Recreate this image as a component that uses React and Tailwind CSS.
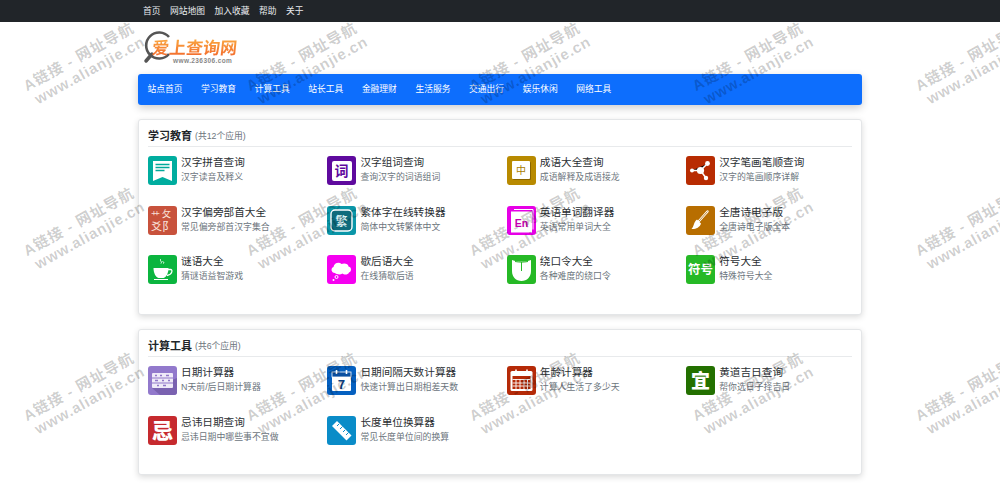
const cjk = { fontFamily: '"Liberation Sans", "Noto Sans CJK SC", sans-serif' };
const iconFont = '"Noto Sans CJK SC", sans-serif';

const topLinks = ["首页", "网站地图", "加入收藏", "帮助", "关于"];
const navLinks = ["站点首页", "学习教育", "计算工具", "站长工具", "金融理财", "生活服务", "交通出行", "娱乐休闲", "网络工具"];

function Glyph({ x = 14.5, y = 20, size = 16, fill = "#fff", weight = 700, children }) {
  return (
    <text x={x} y={y} fontSize={size} fontWeight={weight} fill={fill} textAnchor="middle" fontFamily={iconFont}>
      {children}
    </text>
  );
}

const icons = {
  pinyin: (
    <>
      <path d="M5 5h19v20l-9.500-4L5 25z" fill="#fff" />
      <path d="M7.500 8.500h14M7.500 11.500h14M7.500 14.500h9" stroke="#00a99a" strokeWidth="1.300" />
    </>
  ),
  word: (
    <>
      <rect x="5" y="5" width="20" height="20" rx="2" fill="#fff" />
      <Glyph y={20} size={14} fill="#5f0a9e">词</Glyph>
    </>
  ),
  idiom: (
    <>
      <rect x="6" y="6" width="18" height="18" rx="1" fill="#8a6500" />
      <rect x="5" y="5" width="18" height="18" rx="1" fill="#fff" />
      <Glyph x={14} y={18} size={10} weight={400} fill="#a87c00">中</Glyph>
    </>
  ),
  stroke: (
    <>
      <path d="M6 14.500l8.500 0L21 8M14.500 14.500L20 22" stroke="#fff" strokeWidth="1.500" />
      <circle cx="14.500" cy="14.500" r="3.600" fill="#fff" />
      <circle cx="6" cy="14.500" r="2" fill="#fff" />
      <circle cx="21.500" cy="7.500" r="2.400" fill="#fff" />
      <circle cx="20" cy="22" r="2.200" fill="#fff" />
    </>
  ),
  radical: (
    <>
      <text x="3" y="13" fontSize="9" fill="#f8e0d8" fontFamily={iconFont}>艹</text>
      <text x="14" y="11" fontSize="9" fill="#f8e0d8" fontFamily={iconFont}>攵</text>
      <text x="3" y="25" fontSize="11" fill="#f8e0d8" fontFamily={iconFont}>爻</text>
      <text x="14" y="25" fontSize="12" fill="#f8e0d8" fontFamily={iconFont}>阝</text>
    </>
  ),
  trad: (
    <>
      <rect x="4" y="4" width="21" height="21" rx="4" fill="#0f6b7c" stroke="#fff" strokeWidth="1.400" />
      <Glyph y={19.500} size={12} fill="#d8f2f5">繁</Glyph>
    </>
  ),
  en: (
    <>
      <path d="M7 3.500h19v20" fill="none" stroke="#fff" strokeWidth="1" />
      <rect x="4" y="5.500" width="21" height="21" fill="#fff" />
      <text x="14.500" y="20.500" fontSize="10.500" fontWeight="700" fill="#c400b0" textAnchor="middle" fontFamily="Liberation Sans">En</text>
    </>
  ),
  brush: (
    <>
      <path d="M21.500 5.500L13 15" stroke="#fff" strokeWidth="2.400" strokeLinecap="round" />
      <path d="M21.500 5.500L13 15" stroke="#b86e00" strokeWidth=".8" />
      <path d="M11 13.500l4 4c-1 4-6 6-9.500 5.500 2.500-2 2-7 5.500-9.500z" fill="#fff" />
    </>
  ),
  tea: (
    <>
      <path d="M5.500 13h15c0 5-2 9-5 10h-5c-3-1-5-5-5-10z" fill="#fff" />
      <path d="M20 14.500h2.500c2.500 0 2 5-3.500 6" fill="none" stroke="#fff" strokeWidth="1.300" />
      <path d="M6 24.500h14" stroke="#fff" strokeWidth="1.200" />
      <path d="M13 4c-2 1.500 1.500 2.500 0 4.500M15.500 8.500c1-1 0-1.500-1-2" fill="none" stroke="#fff" strokeWidth="1" />
    </>
  ),
  cloud: (
    <>
      <path d="M8 18c-4 0-4.500-5-1.500-6 .5-4 5.500-5.500 8-3 3-1.500 7 0 7 2.500 3.500.5 3 5.500.5 6-1 2.500-5 2.500-6.500 1-2 1.500-5.500 1.200-7.500-.5z" fill="#fff" />
      <circle cx="9.500" cy="22" r="1.500" fill="none" stroke="#fff" />
      <circle cx="6.500" cy="25" r="1" fill="#fff" />
    </>
  ),
  tongue: (
    <>
      <path d="M5 5c6 2 13 2 19 0v11c0 6-4 10-9.500 10S5 22 5 16z" fill="#fff" />
      <path d="M8 6.500c4 .8 9 .8 13 0M14.500 7v9" stroke="#26b926" strokeWidth="1" fill="none" />
    </>
  ),
  symbol: <Glyph y={19} size={12.500}>符号</Glyph>,
  abacus: (
    <>
      <path d="M29 12v17H12L4 22z" fill="#7a62b0" />
      <rect x="4" y="7" width="21" height="15" rx="1" fill="#efeaf8" />
      <path d="M4 12h21M4 17h21" stroke="#9076c8" strokeWidth="1" />
      <path d="M7 9.500h2M12 9.500h2M18 9.500h3M7 14.500h3M14 14.500h2M20 14.500h2M9 19.500h2M15 19.500h3" stroke="#9076c8" strokeWidth="1.500" />
    </>
  ),
  days: (
    <>
      <rect x="5" y="6" width="19" height="19" rx="1" fill="#fff" />
      <rect x="5" y="6" width="19" height="5" fill="#0a4fa0" stroke="#fff" strokeWidth=".8" />
      <path d="M9.500 4v4M19.500 4v4" stroke="#fff" strokeWidth="1.600" />
      <Glyph y={23} size={12.500} fill="#0a3f80">7</Glyph>
    </>
  ),
  age: (
    <>
      <rect x="3.500" y="5" width="22" height="20" rx="1.500" fill="#fff" />
      <rect x="5.500" y="10" width="18" height="13" fill="#b52a08" />
      <path d="M9 3.500v4M20 3.500v4" stroke="#fff" strokeWidth="1.600" />
      <path d="M5.500 13.500h18M5.500 17h18M5.500 20h18M9 13v10M13 13v10M17 13v10M20.500 13v10" stroke="#fff" strokeWidth=".9" />
    </>
  ),
  lucky: <Glyph y={21.500} size={19} weight={900}>宜</Glyph>,
  taboo: <Glyph y={22} size={21} weight={900}>忌</Glyph>,
  ruler: (
    <>
      <path d="M10 5l14.500 14.500-5 5L5 10z" fill="#fff" />
      <path d="M10 10l2-2M13 13l2.500-2.500M16 16l2-2M19 19l2.500-2.500" stroke="#0a8cc8" strokeWidth="1" />
    </>
  ),
};

const sections = [
  {
    title: "学习教育",
    count: "(共12个应用)",
    top: "h-[196px]",
    items: [
      ["pinyin", "bg-[#00ad9f]", "汉字拼音查询", "汉字读音及释义"],
      ["word", "bg-[#5f0a9e]", "汉字组词查询", "查询汉字的词语组词"],
      ["idiom", "bg-[#b88a00]", "成语大全查询", "成语解释及成语接龙"],
      ["stroke", "bg-[#b82c02]", "汉字笔画笔顺查询", "汉字的笔画顺序详解"],
      ["radical", "bg-[#c8523c]", "汉字偏旁部首大全", "常见偏旁部首汉字集合"],
      ["trad", "bg-[#0a96a8]", "繁体字在线转换器", "简体中文转繁体中文"],
      ["en", "bg-[#e600e6]", "英语单词翻译器", "英语常用单词大全"],
      ["brush", "bg-[#b86e00]", "全唐诗电子版", "全唐诗电子版全本"],
      ["tea", "bg-[#0bb53f]", "谜语大全", "猜谜语益智游戏"],
      ["cloud", "bg-[#f500f0]", "歇后语大全", "在线猜歇后语"],
      ["tongue", "bg-[#26b926]", "绕口令大全", "各种难度的绕口令"],
      ["symbol", "bg-[#26b926]", "符号大全", "特殊符号大全"],
    ],
  },
  {
    title: "计算工具",
    count: "(共6个应用)",
    top: "h-[146px]",
    items: [
      ["abacus", "bg-[#9279cc]", "日期计算器", "N天前/后日期计算器"],
      ["days", "bg-[#0560c0]", "日期间隔天数计算器", "快速计算出日期相差天数"],
      ["age", "bg-[#b52a08]", "年龄计算器", "计算人生活了多少天"],
      ["lucky", "bg-[#237000]", "黄道吉日查询", "帮你选日子择吉日"],
      ["taboo", "bg-[#c62a2e]", "忌讳日期查询", "忌讳日期中哪些事不宜做"],
      ["ruler", "bg-[#0a8cc8]", "长度单位换算器", "常见长度单位间的换算"],
    ],
  },
];

function AppItem({ icon, color, name, desc }) {
  return (
    <div className="flex h-[49.5px] items-start gap-[4px]">
      <svg viewBox="0 0 29 29" className={`h-[29px] w-[29px] shrink-0 rounded-[3px] ${color}`}>
        {icons[icon]}
      </svg>
      <div className="-mt-[1px] min-w-0 whitespace-nowrap">
        <div className="h-[15px] text-[10.65px] leading-[15px] text-[#2b2f33]">{name}</div>
        <div className="h-[15px] text-[8.9px] leading-[15px] text-[#6c757d]">{desc}</div>
      </div>
    </div>
  );
}

function Section({ section }) {
  return (
    <section className={`rounded-[3px] border border-[#e4e6e8] bg-white px-[9px] pt-[5px] shadow-[0_2px_6px_rgba(0,0,0,0.15)] ${section.top}`}>
      <div className="flex h-[22px] items-center gap-[3px] border-b border-[#e8eaec] pt-[2px]">
        <span className="text-[11px] font-bold text-[#212529]">{section.title}</span>
        <span className="text-[8.75px] text-[#6c757d]">{section.count}</span>
      </div>
      <div className="mt-[9px] grid grid-cols-[179.400px_179.400px_179.400px_1fr]">
        {section.items.map(([icon, color, name, desc]) => (
          <AppItem key={name} icon={icon} color={color} name={name} desc={desc} />
        ))}
      </div>
    </section>
  );
}

function Logo() {
  return (
    <div className="relative h-[36px] w-[100px]">
      <svg viewBox="0 0 36 36" className="absolute left-[3px] top-0 h-[36px] w-[36px]">
        <path d="M28 7A13 13 0 1 0 28 24" fill="none" stroke="#555" strokeWidth="2.600" />
        <path d="M11 24L5 31" stroke="#555" strokeWidth="3.500" strokeLinecap="round" />
      </svg>
      <div className="absolute left-[14px] top-[9px] -skew-x-6 whitespace-nowrap bg-gradient-to-b from-[#f9a63f] to-[#f1602a] bg-clip-text text-[17px] font-bold leading-[20px] text-transparent">
        爱上查询网
      </div>
      <div className="absolute left-[35px] top-[27px] whitespace-nowrap text-[6.500px] font-bold leading-[8px] tracking-[0.4px] text-[#888]">
        www.236306.com
      </div>
    </div>
  );
}

function Watermark() {
  const tiles = Array.from({ length: 15 });
  return (
    <div className="pointer-events-none absolute inset-0 overflow-hidden">
      <div className="-ml-[29px] -mt-[19px] grid w-[1120px] grid-cols-[repeat(5,223px)] auto-rows-[165px]">
        {tiles.map((_, i) => (
          <div key={i} className="flex -rotate-[29deg] flex-col items-center justify-center font-bold leading-[19px] text-black/20">
            <div className="whitespace-nowrap text-[15px] tracking-[1px]">A链接 - 网址导航</div>
            <div className="-mt-[2px] ml-[6px] whitespace-nowrap text-[15px] tracking-[0.8px]">www.alianjie.cn</div>
          </div>
        ))}
      </div>
    </div>
  );
}

export default function App() {
  return (
    <div className="relative h-[485px] overflow-hidden bg-white" style={cjk}>
      <header className="h-[22px] bg-[#212529]">
        <div className="mx-auto flex h-full w-[724px] items-center gap-[9.500px] pl-[5px] pt-[2px] text-[8.750px] text-[#e9ecef]">
          {topLinks.map((t) => (
            <span key={t}>{t}</span>
          ))}
        </div>
      </header>

      <main className="mx-auto w-[724px]">
        <div className="pt-[8px]">
          <Logo />
        </div>
        <nav className="mt-[8px] flex h-[31px] items-center gap-[18.600px] rounded-[3px] bg-[#0d6efd] pl-[9.500px] pt-[1px] text-[8.750px] text-white shadow-[0_3px_8px_rgba(0,0,0,0.2)]">
          {navLinks.map((t) => (
            <span key={t}>{t}</span>
          ))}
        </nav>
        <div className="mt-[14px] flex flex-col gap-[14px]">
          {sections.map((s) => (
            <Section key={s.title} section={s} />
          ))}
        </div>
      </main>

      <Watermark />
    </div>
  );
}
